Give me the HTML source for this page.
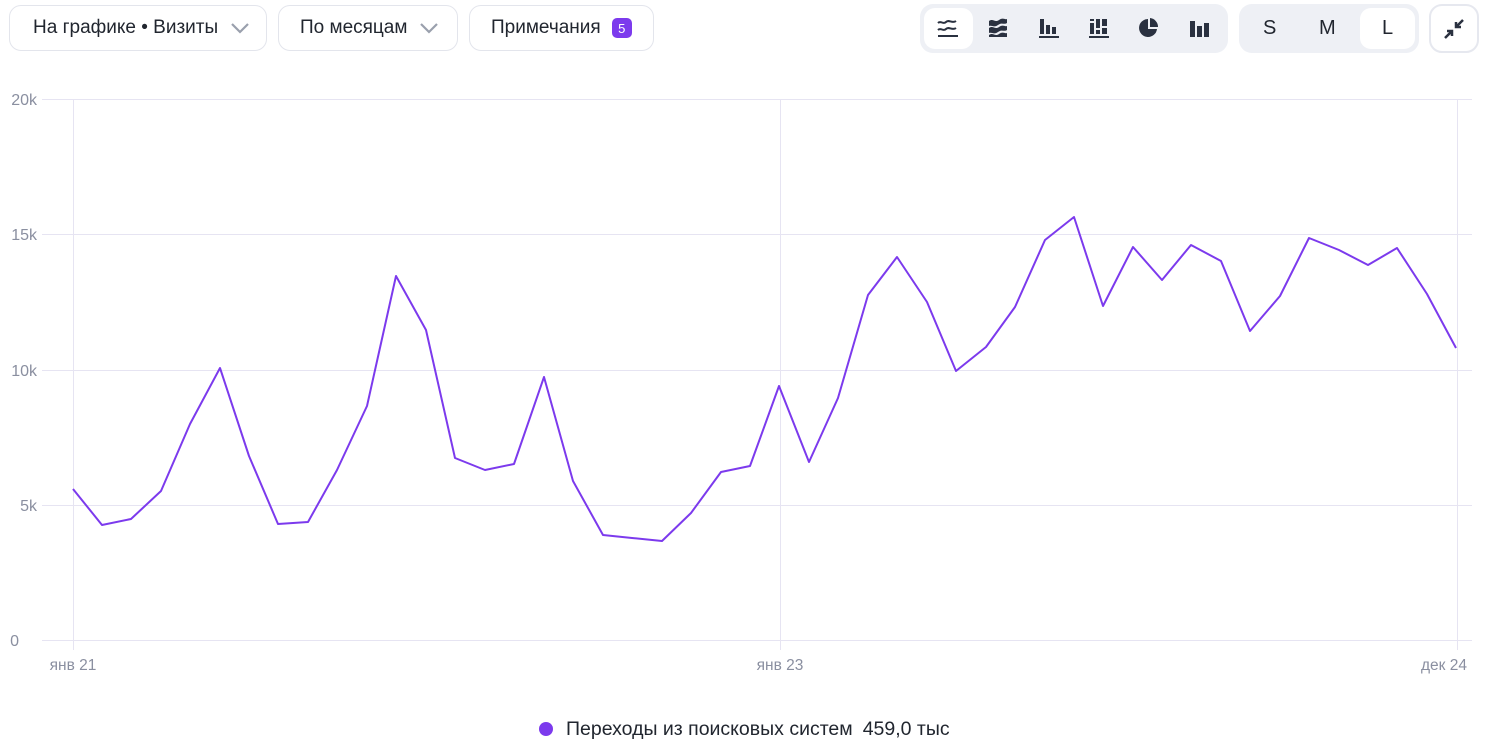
<!DOCTYPE html>
<html><head><meta charset="utf-8"><style>
body{margin:0;width:1486px;height:744px;background:#fff;font-family:"Liberation Sans",sans-serif;position:relative;overflow:hidden;color:#21262f}
.btn{position:absolute;top:5px;height:46px;border:1px solid #e3e5ec;border-radius:12px;box-sizing:border-box;display:flex;align-items:center;font-size:19px;background:#fff}
.grp{position:absolute;top:4px;height:49px;background:#eef0f5;border-radius:13px}
.sel{position:absolute;top:4px;height:41px;background:#fff;border-radius:11px}
.ic{position:absolute;top:16px;width:24px;height:24px}
</style></head><body>
<div class="btn" style="left:9px;width:258px;padding-left:23px">На графике • Визиты<svg style="margin-left:12px" width="20" height="14" viewBox="0 0 20 14"><path d="M2 3l8 8 8-8" fill="none" stroke="#9aa0ad" stroke-width="2.2"/></svg></div>
<div class="btn" style="left:278px;width:180px;padding-left:21px">По месяцам<svg style="margin-left:12px" width="20" height="14" viewBox="0 0 20 14"><path d="M2 3l8 8 8-8" fill="none" stroke="#9aa0ad" stroke-width="2.2"/></svg></div>
<div class="btn" style="left:469px;width:185px;padding-left:21px">Примечания<span style="margin-left:11px;background:#7c3aed;color:#fff;font-size:13px;width:20px;height:20px;border-radius:5px;display:inline-flex;align-items:center;justify-content:center">5</span></div>

<div class="grp" style="left:920px;width:308px">
 <div class="sel" style="left:4px;width:49px"></div>
</div>
<svg class="ic" style="left:936px" viewBox="0 0 24 24" fill="none" stroke="#2a3140" stroke-width="2"><path d="M2 7c3-3 5 2 8-1s6 2 10-1M2 14c3-3 5 2 8-1s6 2 10-1M2 20h20"/></svg>
<svg class="ic" style="left:987px" viewBox="0 0 24 24" fill="#2a3140"><path d="M2 5c4-3 6 2 10-1s6 0 8-1v4c-3 2-5-1-9 2s-6 0-9 1zM2 12c4-3 6 2 10-1s6 0 8-1v4c-3 2-5-1-9 2s-6 0-9 1zM2 19c4-3 6 2 10-1s6 0 8-1v4H2z"/></svg>
<svg class="ic" style="left:1037px" viewBox="0 0 24 24" fill="#2a3140"><rect x="3" y="3" width="4" height="15"/><rect x="9" y="9" width="4" height="9"/><rect x="15" y="11" width="4" height="7"/><rect x="2" y="20" width="20" height="2"/></svg>
<svg class="ic" style="left:1087px" viewBox="0 0 24 24" fill="#2a3140"><rect x="3" y="7" width="4" height="11"/><rect x="9" y="3" width="4" height="9"/><rect x="9" y="14" width="4" height="4"/><rect x="15" y="3" width="5" height="7"/><rect x="15" y="12" width="5" height="6"/><rect x="3" y="3" width="4" height="2"/><rect x="2" y="20" width="20" height="2"/></svg>
<svg class="ic" style="left:1137px" viewBox="0 0 24 24" fill="#2a3140"><path d="M11 3a9 9 0 1 0 9 10h-9z"/><path d="M13 2v9h8a9 9 0 0 0-8-9z"/></svg>
<svg class="ic" style="left:1188px" viewBox="0 0 24 24" fill="#2a3140"><rect x="2" y="5" width="5" height="16"/><rect x="9" y="10" width="5" height="11"/><rect x="16" y="7" width="5" height="14"/></svg>

<div class="grp" style="left:1239px;width:180px"><div class="sel" style="left:121px;width:55px"></div></div>
<div style="position:absolute;top:17px;left:1263px;font-size:20px">S</div>
<div style="position:absolute;top:17px;left:1319px;font-size:20px">M</div>
<div style="position:absolute;top:17px;left:1382px;font-size:20px">L</div>
<div class="btn" style="left:1429px;width:50px;top:4px;height:49px;border:2px solid #e6e8ef;border-radius:13px"><svg style="margin-left:12px" width="22" height="22" viewBox="0 0 22 22" fill="none" stroke="#2a3140" stroke-width="2.5"><path d="M20 2l-7 7M13 4v5h5M2 20l7-7M9 18v-5H4"/></svg></div>

<svg style="position:absolute;left:0;top:0" width="1486" height="744">
<g stroke="#e6e4f2" stroke-width="1">
<line x1="42" y1="99.5" x2="1472" y2="99.5"/><line x1="42" y1="234.5" x2="1472" y2="234.5"/><line x1="42" y1="370.5" x2="1472" y2="370.5"/><line x1="42" y1="505.5" x2="1472" y2="505.5"/><line x1="42" y1="640.5" x2="1472" y2="640.5"/>
<line x1="73.5" y1="99" x2="73.5" y2="650"/><line x1="780.5" y1="99" x2="780.5" y2="650"/><line x1="1457.5" y1="99" x2="1457.5" y2="650"/>
</g>
<g font-family="Liberation Sans" font-size="16" fill="#8a8fa0" text-anchor="end">
<text x="37" y="105">20k</text><text x="37" y="240">15k</text><text x="37" y="376">10k</text><text x="37" y="511">5k</text><text x="19" y="646">0</text>
</g>
<g font-family="Liberation Sans" font-size="15.5" fill="#8a8fa0" text-anchor="middle">
<text x="73" y="670">янв 21</text><text x="780" y="670">янв 23</text><text x="1444" y="670">дек 24</text>
</g>
<polyline fill="none" stroke="#7c3aed" stroke-width="2" stroke-linejoin="round" points="73,489 102,525 131,519 161,491 190,424 220,368 249,456 278,524 308,522 337,470 367,406 396,276 426,330 455,458 485,470 514,464 544,377 573,481 603,535 632,538 662,541 691,513 721,472 750,466 779,386 809,462 838,398 868,295 897,257 927,302 956,371 986,347 1015,307 1045,240 1074,217 1103,306 1133,247 1162,280 1191,245 1221,261 1250,331 1280,296 1309,238 1339,250 1368,265 1397,248 1427,294 1456,348"/>
<circle cx="546" cy="729" r="7" fill="#7c3aed"/>
<text x="566" y="735" font-family="Liberation Sans" font-size="19.5" fill="#21262f">Переходы из поисковых систем<tspan dx="10">459,0 тыс</tspan></text>
</svg>
</body></html>
